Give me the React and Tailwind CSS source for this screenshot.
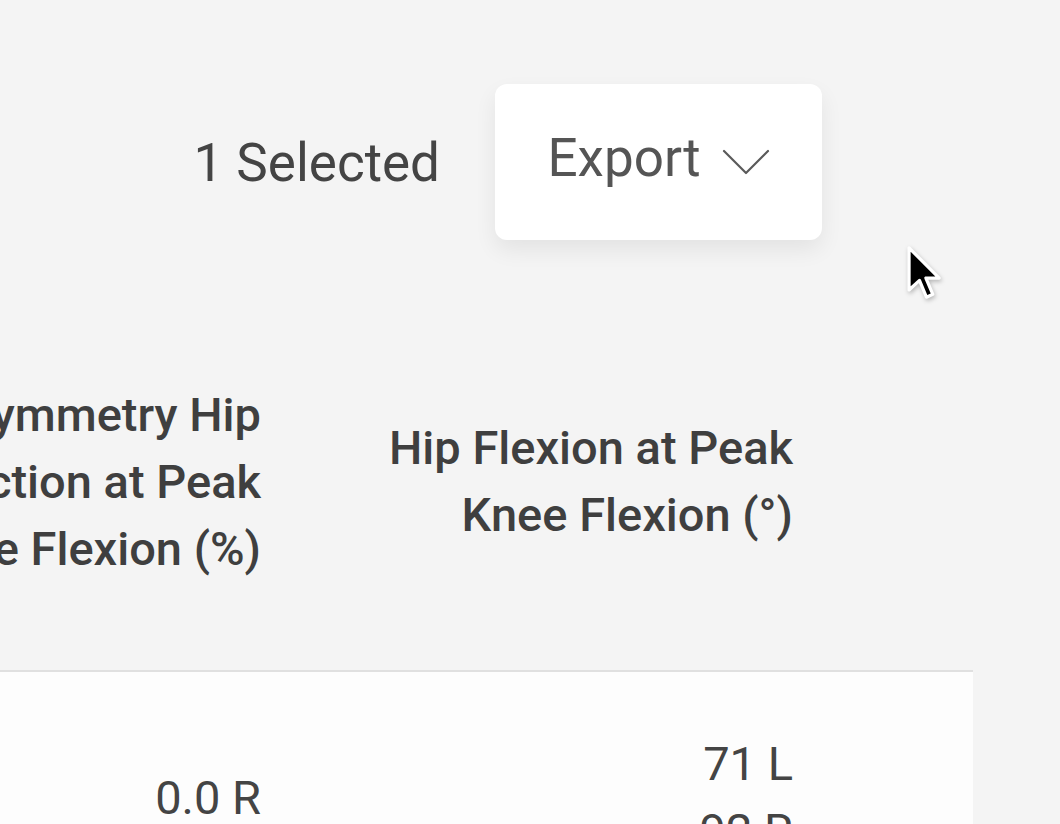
import React from "react";

const font = { fontFamily: "Roboto, 'Noto Sans', sans-serif" };

const Chevron = () => (
 <svg width="48" height="26" viewBox="0 0 48 26" fill="none" className="ml-[21px] mt-[8px]">
  <polyline points="2,2 24,24 46,2" stroke="#5a5a5a" strokeWidth="2.2" strokeLinecap="round" strokeLinejoin="round" />
 </svg>
);

const Cursor = () => (
 <svg
  width="38"
  height="58"
  viewBox="0 0 13 20"
  className="absolute left-[906px] top-[245px] drop-shadow-[1px_2px_2px_rgba(0,0,0,0.25)]"
 >
  <path d="M1 1 L1 15.5 L4.6 12.2 L7 18 L9.2 17 L6.8 11.4 L11.4 11.4 Z" fill="#000" stroke="#fff" strokeWidth="1.1" strokeLinejoin="round" />
 </svg>
);

export default function App() {
 return (
  <div className="relative w-[1060px] h-[824px] overflow-hidden bg-[#f4f4f4] text-[#404040]" style={font}>
   {/* toolbar */}
   <div className="h-[292px] pt-[84px] pr-[238px] flex justify-end items-start">
    <div className="flex items-center h-[156px]">
     <span className="text-[53px] leading-none text-[#444] mr-[55px] mt-[2px]">1 Selected</span>
     <button className="w-[327px] h-[156px] bg-white rounded-[12px] shadow-[0_10px_22px_rgba(0,0,0,0.07)] flex items-center justify-center pb-[8px] text-[53px] leading-none text-[#555]">
      <span>Export</span>
      <Chevron />
     </button>
    </div>
   </div>

   {/* table */}
   <div className="-ml-[300px] w-[1273px]">
    <div className="h-[378px] flex items-center pr-[180px] font-medium text-[47px] leading-[67px] text-[#3f3f3f]">
     <div className="w-[561px] text-right">
      Asymmetry Hip<br />Adduction at Peak<br />Knee Flexion (%)
     </div>
     <div className="w-[532px] text-right">
      Hip Flexion at Peak<br />Knee Flexion (°)
     </div>
    </div>
    <div className="border-t-2 border-[#e0e0e0] bg-[#fdfdfd] pt-[58px] pb-[40px] pr-[180px] flex items-center text-[47px] leading-[67px] text-[#444]">
     <div className="w-[561px] text-right">0.0 R</div>
     <div className="w-[532px] text-right">
      71 L<br />92 R
     </div>
    </div>
   </div>

   <Cursor />
  </div>
 );
}
